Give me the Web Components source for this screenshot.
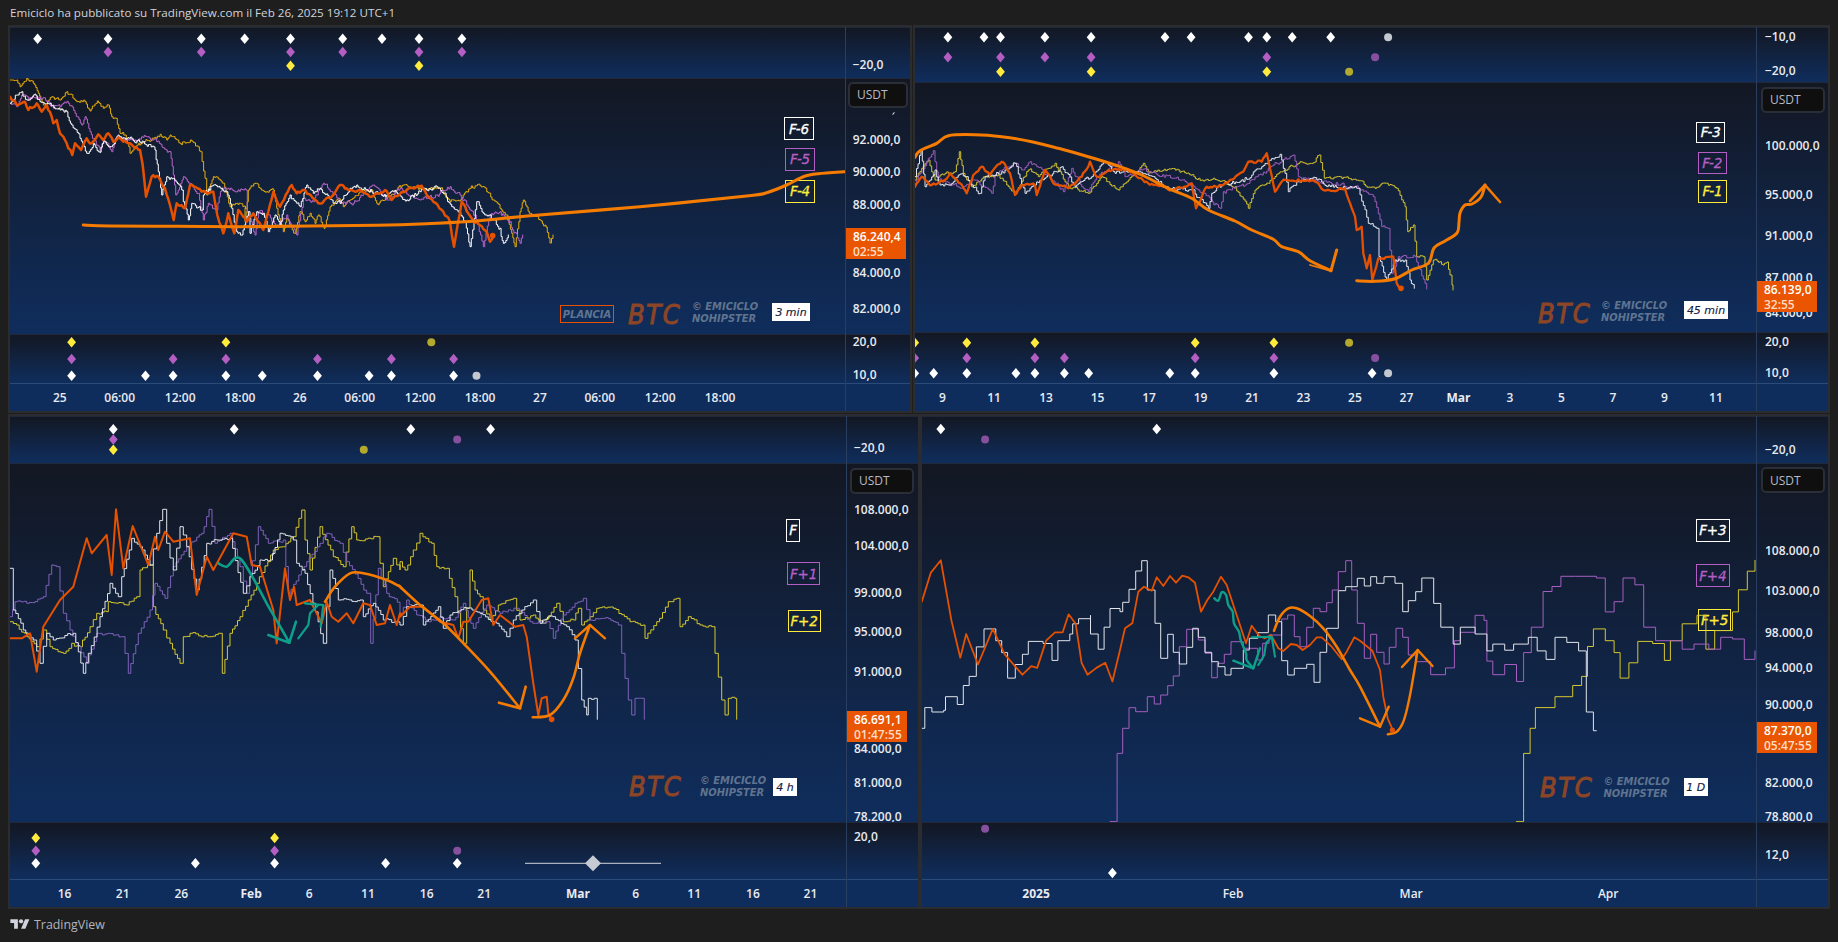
<!DOCTYPE html>
<html lang="it"><head><meta charset="utf-8"><title>BTC</title>
<style>html,body{margin:0;padding:0;background:#1e1e1e;width:1838px;height:942px;overflow:hidden}</style></head>
<body>
<tv-snapshot>
  <tv-header>Emiciclo ha pubblicato su TradingView.com il Feb 26, 2025 19:12 UTC+1</tv-header>
  <chart-row style="--cols:904px 917px;--gap:1px"><chart-panel chart="0"></chart-panel><chart-panel chart="1"></chart-panel></chart-row>
  <chart-row style="--cols:912px 910px;--gap:0px;margin-top:1px"><chart-panel chart="2"></chart-panel><chart-panel chart="3"></chart-panel></chart-row>
  <tv-footer>TradingView</tv-footer>
</tv-snapshot>
<script>
const TF='"Open Sans","Noto Sans",sans-serif';
const DF='"DejaVu Sans",sans-serif';
const W='#ffffff',P='#b45ec4',Y='#ffeb3b',DW='#c3c7cf',DP='#87509f',DY='#b3a92c';
const T=(ox,oy,sx,sy,a)=>{const r=[];for(let i=0;i<a.length;i+=2)r.push([ox+a[i]/sx,oy+a[i+1]/sy]);return r};
const c7=a=>T(10,75,3,3,a),c8=a=>T(915,120,3,3,a),c9=a=>T(10,490,3,3,a),c10=a=>T(400,490,3,3,a),c11=a=>T(1120,540,3,3,a),c4=a=>T(910,410,1.69,2.947,a),c5=a=>T(540,80,3,3,a);
const rng=s=>()=>{s|=0;s=s+0x6D2B79F5|0;let t=Math.imul(s^s>>>15,1|s);t=t+Math.imul(t^t>>>7,61|t)^t;return((t^t>>>14)>>>0)/4294967296};
function wig(pts,step,amp,seed,stepped){
  const r=rng(seed);let n=0,d=`M${pts[0][0].toFixed(1)} ${pts[0][1].toFixed(1)}`;
  for(let i=1;i<pts.length;i++){
    const[a,b]=[pts[i-1],pts[i]],dx=b[0]-a[0],k=Math.max(1,Math.round(Math.abs(dx)/step));
    for(let j=1;j<=k;j++){
      const t=j/k;n=n*.45+(r()-.5)*amp*2;
      const x=a[0]+dx*t,y=a[1]+(b[1]-a[1])*t+(j<k?n:0);
      d+=stepped?`H${x.toFixed(1)}V${y.toFixed(1)}`:`L${x.toFixed(1)} ${y.toFixed(1)}`;
    }
  }
  return d;
}
const poly=p=>'M'+p.map(q=>q[0].toFixed(1)+' '+q[1].toFixed(1)).join('L');
const sm=p=>{let d=`M${p[0][0].toFixed(1)} ${p[0][1].toFixed(1)}`;const n=p.length;for(let i=0;i<n-1;i++){const a=p[Math.max(i-1,0)],b=p[i],c=p[i+1],e=p[Math.min(i+2,n-1)];d+=`C${(b[0]+(c[0]-a[0])/6).toFixed(1)} ${(b[1]+(c[1]-a[1])/6).toFixed(1)} ${(c[0]-(e[0]-b[0])/6).toFixed(1)} ${(c[1]-(e[1]-b[1])/6).toFixed(1)} ${c[0].toFixed(1)} ${c[1].toFixed(1)}`}return d};
const steps=p=>`M${p[0][0].toFixed(1)} ${p[0][1].toFixed(1)}`+p.slice(1).map(q=>`H${q[0].toFixed(1)}V${q[1].toFixed(1)}`).join('');
const px=(a,k=1.704,o=0)=>a.map(d=>o+d/k);
const mk=(y,xs,c,dim)=>xs.map(x=>({x,y,c,dim}));
const px2=a=>px(a,1.69,910);
const L=(d,c,w)=>({d,c,w});
const RED='#e65100',ORG='#f57c00',TEAL='#0e9f8a';

/* ---------- chart 0: 3 min ---------- */
const c0Y='#e5ad0a',c0P='#b964c9';
const ch0={x:10,plot:835,axis:65,rows:[51,256,49],y:27,
 tops:[
  {m:[...mk(38.7,px([64,184,343,417,495,584,651,714,787]),W),...mk(52,px([184,343,495,584,714,787]),P),...mk(65.7,px([495,714]),Y)],t:[['−20,0',65]]},
  {t:[['92.000,0',140],['90.000,0',171.7],['88.000,0',204.7],['84.000,0',273],['82.000,0',309]],price:['86.240,4','02:55',228,31,0],usdt:[2,81.7,60,26.5],nick:[46,35]},
  {m:[...mk(342.3,px([122,385]),Y),{x:735/1.704,y:342.3,c:DY,dim:1},...mk(359,px([122,295,385,541,667,773]),P),...mk(375.7,px([122,248,295,385,447,541,629,667,773]),W),{x:812/1.704,y:375.7,c:DW,dim:1}],t:[['20,0',341.7],['10,0',374.7]]}],
 lx:851.7,
 time:[['25',102],['06:00',204],['12:00',307],['18:00',409],['26',511],['06:00',613],['12:00',716],['18:00',818],['27',920],['06:00',1022],['12:00',1125],['18:00',1227]].map(([s,d])=>[s,d/1.704]),
 lines:[
  L(wig(c7([0,15,20,15,30,35,50,10,70,25,85,55,100,90,125,65,150,75,170,50,200,80,225,80,240,108,262,78,280,100,295,90,305,125,318,130,330,175,345,180,360,235,385,205,430,190,450,178,470,195,480,180,510,205,545,198,572,230,585,310,590,360,610,305,640,325,660,395,680,385,710,400,705,440,715,345,735,325,750,340,770,350,790,345,800,400,820,470,830,430,855,475,870,410,885,440,900,415,915,445,925,420,942,460,960,395,985,370,1000,395,1020,375,1050,350,1085,345,1100,385,1130,370,1160,345,1180,330,1210,335,1240,345,1290,340,1320,380,1355,370,1380,340,1410,332,1430,350,1450,375,1470,400,1490,420,1505,475,1515,515,1530,410,1540,375,1558,415,1590,435,1608,456,1620,504,1629,480]),1.3,1.6,11,true),c0Y,1),
  L(wig(c7([0,85,20,95,35,60,55,75,80,65,110,80,130,100,150,95,175,85,195,115,215,150,225,125,240,170,270,230,280,195,305,230,320,190,375,195,410,185,440,200,480,230,490,300,497,360,520,305,540,325,565,355,580,435,595,385,620,405,635,340,680,350,708,345,712,410,735,480,745,410,770,420,800,450,830,420,860,480,880,370,910,380,940,325,965,350,995,385,1030,385,1060,355,1090,330,1130,375,1170,340,1230,375,1280,360,1320,335,1350,360,1370,390,1395,420,1420,515,1440,420,1470,410,1500,440,1530,505,1538,480]),1.3,2,22,true),c0P,1),
  L(wig(c7([0,85,20,60,35,50,50,75,70,60,90,80,120,85,150,105,170,110,185,150,210,190,230,235,250,205,265,230,285,200,300,215,320,185,350,190,400,200,435,225,445,290,455,360,470,305,490,310,515,345,520,380,535,435,545,385,575,405,580,360,610,330,650,350,665,400,680,470,695,480,715,410,720,475,740,410,760,415,775,470,795,420,810,450,820,405,840,360,860,385,870,395,890,330,910,355,930,340,965,375,990,385,1020,340,1040,330,1070,345,1100,350,1130,360,1150,350,1190,375,1230,350,1280,335,1300,355,1325,395,1340,405,1365,440,1380,515,1400,380,1420,415,1440,420,1470,460,1480,505,1495,480]),1.3,2,33,true),W,1),
  L(wig(c7([0,65,20,90,45,80,55,105,80,85,95,110,110,90,125,125,130,145,140,135,150,175,165,195,175,220,187,240,195,205,213,225,230,190,245,205,265,178,280,195,295,175,310,200,330,190,360,205,390,225,398,270,408,365,425,305,445,305,465,340,480,390,491,435,500,385,525,400,540,330,575,350,610,350,622,420,640,475,655,415,673,475,685,405,710,440,730,415,745,440,760,465,790,350,810,395,845,330,860,355,880,345,925,385,960,370,990,330,1020,345,1050,345,1085,365,1125,345,1145,375,1190,345,1235,332,1260,370,1300,410,1320,440,1332,515,1355,380,1385,430,1400,440,1430,470,1440,500,1450,482]),1.8,1.5,44),RED,2.5),
  L(sm([...c7([220,450,300,453,500,454,700,455,900,453,1100,451,1250,446,1400,438,1560,422]),...c5([300,380,620,348,680,338,740,315,790,290,835,281,913,275])]),ORG,3.1)],
 dots:[[10+1448/3,75+482/3,2.8,RED]],
 labels:[['F-6',784,117,30,23,W],['F-5',785.3,148.3,29.5,22.4,P],['F-4',785.3,180.3,29.5,22.4,Y]],
 plancia:[560,305,54,18],btc:[628,301],em:[692,301],tf:['3 min',772,303,38,18]
};

/* ---------- chart 1: 45 min ---------- */
const c1Y='#d2c22e',c1P='#9c5cb9',c1W='#e6e8ef';
const ch1={x:915,plot:841,axis:72,rows:[55,250,51],y:27,
 tops:[
  {m:[...mk(37.3,px2([64,125,153,228,306,431,475,572,603,646,711]),W),{x:910+808/1.69,y:37.3,c:DW,dim:1},...mk(57.3,px2([64,153,228,306,603]),P),{x:910+786/1.69,y:57.3,c:DP,dim:1},...mk(71.7,px2([153,306,603]),Y),{x:910+742/1.69,y:71.7,c:DY,dim:1}],t:[['−10,0',37],['−20,0',70.7]]},
  {t:[['100.000,0',145.7],['95.000,0',194.7],['91.000,0',235.7],['87.000,0',278],['84.000,0',313]],price:['86.139,0','32:55',281,31,0],usdt:[4,86.7,64,26.3]},
  {m:[...mk(342.7,px2([8,96,211,482,615]),Y),{x:910+742/1.69,y:342.7,c:DY,dim:1},...mk(358,px2([8,96,211,261,482,615]),P),{x:910+786/1.69,y:358,c:DP,dim:1},...mk(373.3,px2([8,40,96,179,211,261,302,439,482,615,781]),W),{x:910+808/1.69,y:373.3,c:DW,dim:1}],t:[['20,0',341.7],['10,0',372.7]]}],
 lx:1764,
 time:[['9',55],['11',142],['13',230],['15',317],['17',404],['19',491],['21',578],['23',665],['25',752],['27',839],['Mar',927,1],['3',1014],['5',1101],['7',1188],['9',1275],['11',1362]].map(([s,d,b])=>[s,910+d/1.69,b]),
 lines:[
  L(wig([...c8([0,180,40,120,60,180,90,160,120,155,133,95,145,160,170,200,210,170,250,165,300,220,340,150,370,170,420,130,460,200,520,220,560,170,610,210,640,180,685,130,700,155,790,150,860,180,905,180,960,200,1000,265,1020,210,1060,190,1090,160,1150,130,1195,128,1212,105,1228,175,1300,175,1380,205,1400,190,1445,205,1470,260,1478,335,1495,315,1505,410,1525,410,1535,480,1555,420]),[1437,261],[1443,265],[1447,262],[1450,275],[1452,285],[1453,290]],1.6,1.5,51,true),c1Y,1),
  L(wig(c8([0,190,55,92,70,180,110,195,145,200,175,180,230,220,240,165,300,130,320,150,345,125,400,165,445,215,470,145,500,200,520,215,550,170,610,125,630,170,680,150,800,180,850,210,915,265,925,215,990,195,1040,165,1085,130,1135,105,1150,170,1240,185,1330,205,1375,230,1400,320,1420,325,1430,460,1450,410,1500,410,1530,490,1535,507]),1.6,1.8,52,true),c1P,1),
  L(wig(c8([0,170,18,90,30,200,60,150,75,195,100,195,130,165,150,170,195,220,210,170,260,155,300,130,330,220,360,195,440,140,480,200,530,170,570,125,600,160,660,155,720,175,760,205,830,210,880,265,890,220,920,195,985,185,1040,140,1095,103,1110,160,1120,215,1150,185,1190,175,1240,195,1290,205,1330,205,1360,310,1385,325,1392,410,1415,480,1440,420,1470,420,1485,480,1498,505]),1.6,1.8,53,true),c1W,1),
  L(wig(c8([0,200,20,170,50,195,90,180,105,160,135,190,155,220,175,165,200,140,225,165,260,125,285,160,300,225,320,195,360,195,365,225,390,150,410,180,415,190,460,205,500,170,525,125,545,170,580,150,640,150,700,190,770,210,830,190,843,265,875,200,925,195,985,155,1000,125,1040,125,1055,100,1080,215,1100,185,1150,178,1200,185,1225,210,1290,205,1320,290,1325,330,1340,320,1345,400,1355,445,1365,405,1372,480,1390,415,1435,410,1445,490,1458,505]),1.8,1.4,54),RED,2.3),
  L(sm(c8([0,112,15,92,65,70,100,47,180,44,260,50,350,65,430,85,520,110,600,135,680,165,760,205,830,235,880,270,960,303,1010,330,1075,358,1100,380,1150,395,1185,422,1248,452])),ORG,3),
  L(poly(c8([1248,452,1265,390])),ORG,3),
  L(poly(c8([1185,435,1245,452])),ORG,1.8),
  L(sm([...c8([1325,482,1380,484,1440,476,1490,450,1540,430]),[1434,248],[1445,241],[1457,233],[1459,222],[1460,213],[1465,205],[1472,204],[1481,197],[1485,185]]),ORG,3),
  L(poly([[1470,201],[1485,185],[1500,202]]),ORG,2.6)],
 dots:[[915+1458/3,120+505/3,2.8,RED]],
 labels:[['F-3',1696,121.7,29.4,21.6,W],['F-2',1697.6,151.7,29,22,P],['F-1',1698,180,29,22.7,Y]],
 btc:[1538,300],em:[1601,300],tf:['45 min',1684,301,44,18]
};

/* ---------- chart 2: 4 h ---------- */
const c2Y='#d6c72d',c2P='#7e62b9',c2W='#e2e5ec';
const ch2={x:10,plot:836,axis:72,rows:[47,359,57],y:416,
 tops:[
  {m:[...mk(429.3,px([193,399,700,836]),W),{x:193/1.704,y:439.5,c:P},{x:779/1.704,y:439.5,c:DP,dim:1},{x:193/1.704,y:449.7,c:Y},{x:620/1.704,y:449.7,c:DY,dim:1}],t:[['−20,0',448.3]]},
  {t:[['108.000,0',509.8],['104.000,0',545.7],['99.000,0',592.6],['95.000,0',631.6],['91.000,0',672.3],['84.000,0',748.6],['81.000,0',782.6],['78.200,0',816.5]],price:['86.691,1','01:47:55',711,31,0],usdt:[3,467.7,64,26.3]},
  {m:[...mk(838,px([61,468]),Y),...mk(850.8,px([61,468]),P),{x:779/1.704,y:850.8,c:DP,dim:1},...mk(863.3,px([61,333,468,657,779]),W)],t:[['20,0',836.9]],slider:[525,661,863.3,593]}],
 lx:853,
 time:[['16',110],['21',209],['26',309],['Feb',428,1],['6',527],['11',627],['16',727],['21',825],['Mar',985,1],['6',1083],['11',1183],['16',1283],['21',1381]].map(([s,d,b])=>[s,d/1.704,b]),
 lines:[
  L(wig([...c9([0,395,20,405,50,440,80,470,100,420,120,470,160,490,185,460,210,470,240,410,260,370,290,365,295,335,350,345,380,320,390,240,420,225,430,350,460,420,480,460,510,520,520,440,540,430,600,440,625,430,637,550,660,430,690,380,715,330,740,280,790,180,820,170,850,140,875,60,885,150,900,240,930,110,970,200,1000,230,1025,110,1040,150,1100,140,1120,290,1150,205,1170,240]),...c10([0,215,15,240,40,180,60,130,95,160,110,230,140,235,165,320,190,460,210,240,225,300,240,320,250,360,270,390,295,345,340,325,360,390,400,375,430,400,470,340,490,395,520,390,535,355,545,405,570,380,590,355,640,355,690,395,730,405,735,445,770,395,805,335,830,325,840,410,865,380,900,405,935,410,945,490,965,630,975,675,985,625,1005,625,1010,688])],2.7,1.4,61,true),c2Y,1),
  L(wig([...c9([0,380,15,335,50,340,100,320,125,225,140,230,160,370,180,420,230,520,260,430,335,440,355,550,385,430,420,360,435,280,465,325,490,230,530,170,575,130,597,58,615,160,660,130,690,230,710,310,745,110,775,160,820,150,835,310,890,215,930,160,950,130,990,160,1010,215,1070,310,1082,460,1105,235,1130,310,1170,340]),...c10([0,370,20,330,50,375,85,395,120,380,160,390,190,340,220,415,260,345,300,370,350,355,390,395,440,395,460,445,490,375,525,340,550,325,570,390,610,385,655,405,665,490,685,630,695,675,705,625,725,625,733,688])],2.7,1.4,62,true),c2P,1),
  L(wig([...c9([0,235,10,360,40,420,70,450,90,520,110,430,130,450,190,430,220,550,235,490,270,380,300,280,325,320,335,260,365,145,390,170,420,225,440,130,458,58,470,160,490,240,510,110,530,170,560,300,590,160,620,150,660,145,700,310,720,260,750,210,780,210,810,130,850,150,860,220,885,250,940,460,960,240,985,330,1050,330,1060,380,1090,340,1120,390,1170,400]),...c10([0,405,20,350,60,345,70,405,115,350,130,415,150,375,200,355,240,370,290,400,320,440,340,390,400,330,420,400,450,378,500,410,525,450,545,630,560,675,565,625,583,625,592,688])],2.7,1.4,63,true),c2W,1),
  L(poly([...c9([0,445,35,445,60,430,80,545,100,410,150,330,190,290,230,145,245,190,290,135,305,255,318,58,340,235,368,108,415,225,435,140,445,180,465,125,490,155,540,145,560,315,590,200,610,240,670,130,710,140,725,225,750,230,790,360,800,460,825,235,840,330,852,290,860,345,900,330,935,400,950,335,965,380,985,395,1010,370,1030,400,1060,340,1080,345,1100,405,1125,400,1140,345,1160,405,1170,370]),...c10([0,380,30,350,70,350,120,395,160,405,175,445,190,395,205,395,245,330,265,325,280,405,300,375,345,410,370,405,380,440,400,580,415,675,425,625,440,620,445,670,455,688])]),RED,2),
  L(sm(c9([625,220,650,230,675,205,695,210,730,265,770,340,805,400,838,458])),TEAL,2.6),
  L(poly(c9([775,435,838,458,858,395])),TEAL,2.6),
  L(poly(c9([865,445,895,405,900,370,925,345,885,340,940,345,932,410])),TEAL,2.2),
  L(sm([...c9([945,335,975,290,1020,250,1060,250,1130,270,1170,290]),...c10([0,290,60,345,130,400,195,465,270,545,360,655])]),ORG,2.6),
  L(poly(c10([297,638,360,655,377,590])),ORG,2.6),
  L(sm(c10([398,682,450,675,490,630,520,565,540,490,570,405])),ORG,2.6),
  L(poly(c10([525,445,570,405,615,445])),ORG,2.4)],
 dots:[[400+455/3,490+688/3,2.8,RED]],
 labels:[['F',785.8,519,14.7,22.7,W],['F+1',787,562.4,33,22.4,P],['F+2',787.5,609.5,33,22,Y]],
 btc:[629,773],em:[700,775],tf:['4 h',773,778,24,18]
};

/* ---------- chart 3: 1 D ---------- */
const ch3={x:922,plot:834,axis:72,rows:[47,359,57],y:416,
 tops:[
  {m:[...mk(429,px2([52,417]),W),{x:910+127/1.69,y:439.5,c:DP,dim:1}],t:[['−20,0',449.7]]},
  {t:[['108.000,0',550.5],['103.000,0',590.5],['98.000,0',632.6],['94.000,0',667.6],['90.000,0',704.5],['82.000,0',782.6],['78.800,0',816.5]],price:['87.370,0','05:47:55',722,31,0],usdt:[4,466.7,64,26.8]},
  {m:[{x:910+127/1.69,y:828.7,c:DP,dim:1},{x:910+342/1.69,y:873,c:W}],t:[['12,0',854.5]]}],
 lx:1764,
 time:[['2025',213,1],['Feb',546],['Mar',847],['Apr',1180]].map(([s,d,b])=>[s,910+d/1.69,b]),
 lines:[
  L(steps([...c4([1025,1213,1037,1190,1037,1012,1048,938,1057,877,1090,845,1120,812,1135,785,1145,697,1155,645,1175,680,1190,715,1200,790,1215,745,1230,682,1255,688,1275,738,1285,680,1305,630,1330,605,1345,705,1360,650,1390,595,1400,530,1415,475,1428,443])]),'#d6c72d',1),
  L(steps([...c4([330,1230,338,1213,350,1190,350,1012]),...c11([0,640,8,565,27,503,47,515,82,470,103,492,122,465,143,437,160,408,178,320,200,268,235,300,255,340,275,413,292,370,313,343,333,305,370,325,413,360,428,310,447,285,485,237,503,225,523,290,540,320,560,262,580,205,600,215,620,188,637,150,655,95,677,62,695,150,712,250,733,355,752,283,770,337,792,372,808,322,828,265,848,292,865,345,887,365]),...c4([880,780,905,760,920,680,930,655,955,605,970,620,975,740,985,780,1005,750,1025,800,1037,715,1050,640,1070,535,1085,520,1100,490,1125,490,1160,495,1175,595,1190,565,1205,495,1225,515,1240,640,1260,680,1285,680,1305,705,1325,690,1350,705,1370,670,1390,675,1410,735,1428,710])]),'#a45fc0',1),
  L(steps([...c4([20,938,25,877,37,890,57,885,60,845,80,868,90,812,100,785,112,698,125,645,145,680,155,715,165,790,178,750,190,720,200,682,225,688,240,738,250,680,270,660,275,630,285,615,305,605,305,660,318,705,328,640,338,585]),...c11([0,215,8,187,27,148,47,93,65,62,82,150,103,150,105,250,122,355,143,283,160,337,178,372,200,322,218,265,235,292,255,337,275,365,295,380,315,405,333,385,370,330,388,295,413,278,445,225,467,245,485,362,503,405,523,385,560,373,582,427,600,337,620,265,655,152,677,140,712,115,733,138,752,110,770,130,792,110,825,130,848,215,865,182,887,155,900,155]),...c4([865,495,885,570,897,640,918,690,930,640,955,660,975,710,985,690,1005,708,1020,690,1045,670,1060,710,1075,735,1090,670,1110,685,1130,710,1143,890,1155,945,1160,945])]),'#e2e5ec',1),
  L(poly([...c4([20,565,35,480,52,443,70,620,85,730,95,660,115,750,140,645,160,720,190,780,205,755,215,760,230,680,245,655,258,655,268,602,280,630,290,745,300,780,315,760,330,745,342,800]),...c11([0,330,15,265,37,250,55,155,72,140,95,152,110,112,130,138,150,108,168,128,187,107,205,112,225,128,243,215,262,180,280,155,303,110,320,135,378,310,395,257,418,288,435,295,453,285,475,325,490,333,513,312,530,315,548,330,570,315,590,292,605,292,635,320,665,358,680,335,703,292,720,302,757,332,780,390,790,470,803,535,818,570])]),RED,1.8),
  L(sm(c11([283,175,295,182,305,157,318,165,325,195,338,215,342,250,357,275,362,300,378,340,380,360,400,385])),TEAL,2.4),
  L(poly(c11([340,362,400,385,420,325])),TEAL,2.4),
  L(poly(c11([415,375,433,345,438,310,455,290,395,292,455,290,465,350])),TEAL,2.1),
  L(sm(c11([462,272,480,230,505,205,530,205,570,228,610,265,650,320,690,390,720,440,780,560])),ORG,2.6),
  L(poly(c11([720,535,780,560,806,500])),ORG,2.4),
  L(sm([...c11([803,583,830,575,850,545,865,490,880,410]),[1417.7,650]]),ORG,2.4),
  L(poly([[1402,667],[1417.7,650],[1432.5,666]]),ORG,2.4)],
 dots:[[1120+817/3,540+570/3,2.6,RED]],
 labels:[['F+3',1696,519,33.5,22.7,W],['F+4',1696,564.4,33.5,22.4,P],['F+5',1698,608.5,33,22,Y]],
 btc:[1540,774],em:[1603.5,776],tf:['1 D',1684,778,23.6,18]
};
const CHARTS=[ch0,ch1,ch2,ch3];

class TvSnapshot extends HTMLElement{constructor(){super();this.attachShadow({mode:'open'}).innerHTML=`<style>:host{display:flex;flex-direction:column;width:1838px;height:942px;padding-left:8px;box-sizing:border-box;background:#1e1e1e}</style><slot></slot>`}}
class TvHeader extends HTMLElement{constructor(){super();this.attachShadow({mode:'open'}).innerHTML=`<style>:host{display:flex;align-items:center;height:25px;padding-left:2px;font:11.65px ${TF};color:#d1d4dc;white-space:nowrap;box-sizing:border-box}</style><slot></slot>`}}
class ChartRow extends HTMLElement{constructor(){super();this.attachShadow({mode:'open'}).innerHTML=`<style>:host{display:grid;grid-template-columns:var(--cols);column-gap:var(--gap);flex:none}</style><slot></slot>`}}
class TvFooter extends HTMLElement{constructor(){super();this.attachShadow({mode:'open'}).innerHTML=`<style>:host{display:flex;align-items:center;gap:4px;flex:1;padding:0 0 3px 2px;font:12.4px ${TF};color:#b2b5be;box-sizing:border-box}svg{width:20px;height:15px;fill:#d1d4dc;flex:none}</style><svg viewBox="0 0 36 28"><path d="M14 22H7V11H0V4h14v18zM28 22h-8l7.5-18h8L28 22z"/><circle cx="20" cy="8" r="4"/></svg><slot></slot>`}}

class ChartPane extends HTMLElement{
  constructor(){super();this.attachShadow({mode:'open'})}
  draw(ch,i,y0,h){
    const c=ch.tops[i],main=i===1;let svg='';
    if(main){
      svg+=ch.lines.map(l=>`<path d="${l.d}" fill="none" stroke="${l.c}" stroke-width="${l.w}" stroke-linejoin="round" stroke-linecap="round"/>`).join('');
      svg+=ch.dots.map(d=>`<circle cx="${d[0]}" cy="${d[1]}" r="${d[2]}" fill="${d[3]}"/>`).join('');
    }
    if(c.slider){const[a,b,y,m]=c.slider;svg+=`<path d="M${a} ${y}H${b}" stroke="#d1d4dc" stroke-width="1"/><path d="M${m-8} ${y}L${m} ${y-8}L${m+8} ${y}L${m} ${y+8}Z" fill="#c6cad2"/>`}
    (c.m||[]).forEach(m=>{svg+=m.dim?`<circle cx="${m.x.toFixed(1)}" cy="${m.y}" r="4" fill="${m.c}"/>`:`<path d="M${(m.x-4.4).toFixed(1)} ${m.y}L${m.x.toFixed(1)} ${m.y-5.2}L${(m.x+4.4).toFixed(1)} ${m.y}L${m.x.toFixed(1)} ${m.y+5.2}Z" fill="${m.c}"/>`});
    const lb=(ch.labels&&main)?ch.labels.map(l=>`<div class="flabel" style="left:${l[1]-ch.x}px;top:${l[2]-y0}px;width:${l[3]}px;height:${l[4]}px;color:${l[5]};border-color:${l[5]}">${l[0]}</div>`).join(''):'';
    let wm='';
    if(main){
      if(ch.plancia){const p=ch.plancia;wm+=`<div class="plancia" style="left:${p[0]-ch.x}px;top:${p[1]-y0}px;width:${p[2]}px;height:${p[3]}px">PLANCIA</div>`}
      wm+=`<div class="btc" style="left:${ch.btc[0]-ch.x}px;top:${ch.btc[1]-y0}px">BTC</div>`;
      wm+=`<div class="em" style="left:${ch.em[0]-ch.x}px;top:${ch.em[1]-y0}px">© EMICICLO<br>NOHIPSTER</div>`;
      const t=ch.tf;wm+=`<div class="tf" style="left:${t[1]-ch.x}px;top:${t[2]-y0}px;width:${t[3]}px;height:${t[4]}px">${t[0]}</div>`;
    }
    const ticks=(c.t||[]).map(t=>`<div class="tick" style="left:${ch.lx-ch.x-ch.plot}px;top:${t[1]-y0}px">${t[0]}</div>`).join('');
    let extra='';
    if(c.price){const p=c.price;extra+=`<div class="price" style="top:${p[2]-y0}px;height:${p[3]}px"><span>${p[0]}</span><span class="sub">${p[1]}</span></div>`}
    if(c.usdt){const u=c.usdt;extra+=`<div class="usdt" style="left:${u[0]}px;top:${u[1]-y0}px;width:${u[2]}px;height:${u[3]}px">USDT</div>`}
    if(c.nick)extra+=`<div class="nick" style="left:${c.nick[0]}px;top:${c.nick[1]}px"></div>`;
    this.shadowRoot.innerHTML=`<style>
      :host{display:grid;grid-template-columns:${ch.plot}px ${ch.axis}px;height:${h}px;background:linear-gradient(180deg,#131722 0%,#10284f 75%,#0f2d5c 100%);position:relative;box-shadow:inset 0 1px 0 #20283a}
      .plot,.axis{position:relative;overflow:hidden}
      .axis{border-left:1px solid #2a3f60;box-sizing:border-box;overflow:visible}
      svg{position:absolute;left:0;top:0;width:100%;height:100%}
      .tick{position:absolute;transform:translateY(-50%);font:600 12px ${TF};color:#e9ebf1;white-space:nowrap;line-height:14px}
      .price{position:absolute;left:0;width:60px;background:#e95500;color:#fff;font:600 12px/15px ${TF};display:flex;flex-direction:column;justify-content:center;padding-left:7px;box-sizing:border-box;white-space:nowrap}
      .price .sub{color:#ffdcc4}
      .usdt{position:absolute;background:#0f0f0f;border:2px solid #2a2e39;border-radius:5px;box-sizing:border-box;color:#b8bbc4;font:400 12px ${TF};display:flex;align-items:center;padding-left:7px}
      .nick{position:absolute;width:3px;height:1px;background:#d1d4dc;transform:rotate(-50deg)}
      .flabel{position:absolute;box-sizing:border-box;border:1px solid;display:flex;align-items:center;justify-content:center;font:italic 400 13.5px ${DF};letter-spacing:-.2px;-webkit-text-stroke:.3px currentColor;white-space:nowrap}
      .plancia{position:absolute;box-sizing:border-box;border:1px solid #e65100;color:#5f7490;font:italic 700 10px ${DF};display:flex;align-items:center;justify-content:center}
      .btc{position:absolute;font:italic 400 27px/27px ${DF};font-stretch:condensed;-webkit-text-stroke:1px #8c4526;color:#8c4526;letter-spacing:1.6px;white-space:nowrap}
      .em{position:absolute;font:italic 700 11px/12px ${DF};font-stretch:condensed;color:#5f7490;white-space:nowrap}
      .tf{position:absolute;background:#fff;color:#16203f;font:italic 400 11px ${DF};-webkit-text-stroke:.15px #16203f;display:flex;align-items:center;justify-content:center;white-space:nowrap}
    </style>
    <div class="plot">${lb}${wm}<svg viewBox="${ch.x} ${y0} ${ch.plot} ${h}">${svg}</svg></div>
    <div class="axis">${ticks}${extra}</div>`;
  }
}
class TimeAxis extends HTMLElement{
  constructor(){super();this.attachShadow({mode:'open'})}
  draw(ch){
    const tk=ch.time.map(t=>`<div class="t" style="left:${t[1]-ch.x}px;${t[2]?'font-weight:700':''}">${t[0]}</div>`).join('');
    this.shadowRoot.innerHTML=`<style>
      :host{display:grid;grid-template-columns:${ch.plot}px ${ch.axis}px;height:28px;background:#0f2d5c;box-shadow:inset 0 1px 0 #2a4a78}
      .plot{position:relative}.r{border-left:1px solid #2a3f60}
      .t{position:absolute;top:14px;transform:translate(-50%,-50%);font:600 12px ${TF};color:#e9ebf1;white-space:nowrap}
    </style><div class="plot">${tk}</div><div class="r"></div>`;
  }
}
class ChartPanel extends HTMLElement{
  constructor(){super();this.attachShadow({mode:'open'}).innerHTML=`<style>:host{display:flex;flex-direction:column;border:2px solid #2a2c30;box-sizing:border-box;background:#131722}</style>`}
  connectedCallback(){
    const ch=CHARTS[+this.getAttribute('chart')];let y=ch.y;
    ch.rows.forEach((h,i)=>{const p=document.createElement('chart-pane');this.shadowRoot.append(p);p.draw(ch,i,y,h);y+=h});
    const t=document.createElement('time-axis');this.shadowRoot.append(t);t.draw(ch);
  }
}
customElements.define('chart-pane',ChartPane);
customElements.define('time-axis',TimeAxis);
customElements.define('chart-panel',ChartPanel);
customElements.define('chart-row',ChartRow);
customElements.define('tv-header',TvHeader);
customElements.define('tv-footer',TvFooter);
customElements.define('tv-snapshot',TvSnapshot);
</script>
</body></html>
